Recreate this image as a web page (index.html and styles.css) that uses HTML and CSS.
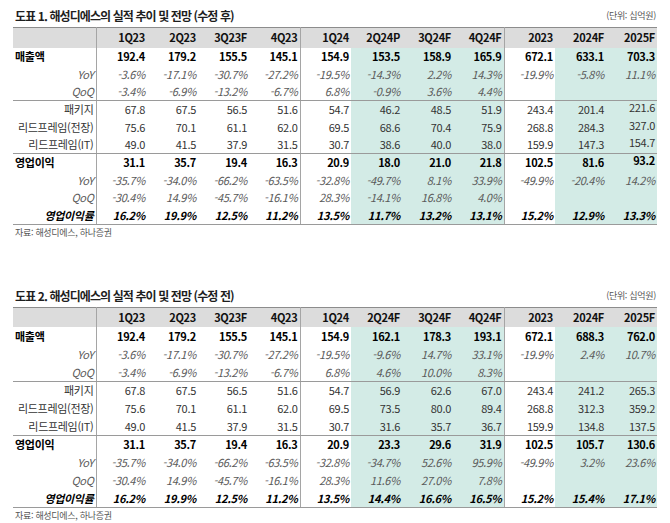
FILE: index.html
```html
<!DOCTYPE html>
<html lang="ko">
<head>
<meta charset="utf-8">
<title>해성디에스 실적 추이 및 전망</title>
<link rel="stylesheet" href="styles.css">
</head>
<body>
<div class="page">

<section class="block">
  <div class="caption">
    <h2 class="title">도표 1. 해성디에스의 실적 추이 및 전망 (수정 후)</h2>
    <span class="unit">(단위: 십억원)</span>
  </div>
  <table class="fin">
    <colgroup>
      <col class="c-label"><col><col><col><col><col><col class="hl"><col class="hl"><col class="hl"><col><col class="hl"><col class="hl">
    </colgroup>
    <thead>
      <tr><th class="lab"></th><th>1Q23</th><th>2Q23</th><th>3Q23F</th><th class="sep">4Q23</th><th>1Q24</th><th>2Q24P</th><th>3Q24F</th><th class="sep">4Q24F</th><th>2023</th><th>2024F</th><th>2025F</th></tr>
    </thead>
    <tbody>
      <tr class="bold"><td class="lab left">매출액</td><td>192.4</td><td>179.2</td><td>155.5</td><td class="sep">145.1</td><td>154.9</td><td>153.5</td><td>158.9</td><td class="sep">165.9</td><td>672.1</td><td>633.1</td><td>703.3</td></tr>
      <tr class="pct"><td class="lab">YoY</td><td>-3.6%</td><td>-17.1%</td><td>-30.7%</td><td class="sep">-27.2%</td><td>-19.5%</td><td>-14.3%</td><td>2.2%</td><td class="sep">14.3%</td><td>-19.9%</td><td>-5.8%</td><td>11.1%</td></tr>
      <tr class="pct end"><td class="lab">QoQ</td><td>-3.4%</td><td>-6.9%</td><td>-13.2%</td><td class="sep">-6.7%</td><td>6.8%</td><td>-0.9%</td><td>3.6%</td><td class="sep">4.4%</td><td></td><td></td><td></td></tr>
      <tr class="sub"><td class="lab">패키지</td><td>67.8</td><td>67.5</td><td>56.5</td><td class="sep">51.6</td><td>54.7</td><td>46.2</td><td>48.5</td><td class="sep">51.9</td><td>243.4</td><td>201.4</td><td class="up">221.6</td></tr>
      <tr class="sub"><td class="lab">리드프레임(전장)</td><td>75.6</td><td>70.1</td><td>61.1</td><td class="sep">62.0</td><td>69.5</td><td>68.6</td><td>70.4</td><td class="sep">75.9</td><td>268.8</td><td>284.3</td><td class="up">327.0</td></tr>
      <tr class="sub end"><td class="lab">리드프레임(IT)</td><td>49.0</td><td>41.5</td><td>37.9</td><td class="sep">31.5</td><td>30.7</td><td>38.6</td><td>40.0</td><td class="sep">38.0</td><td>159.9</td><td>147.3</td><td class="up">154.7</td></tr>
      <tr class="bold"><td class="lab left">영업이익</td><td>31.1</td><td>35.7</td><td>19.4</td><td class="sep">16.3</td><td>20.9</td><td>18.0</td><td>21.0</td><td class="sep">21.8</td><td>102.5</td><td>81.6</td><td class="up">93.2</td></tr>
      <tr class="pct"><td class="lab">YoY</td><td>-35.7%</td><td>-34.0%</td><td>-66.2%</td><td class="sep">-63.5%</td><td>-32.8%</td><td>-49.7%</td><td>8.1%</td><td class="sep">33.9%</td><td>-49.9%</td><td>-20.4%</td><td>14.2%</td></tr>
      <tr class="pct"><td class="lab">QoQ</td><td>-30.4%</td><td>14.9%</td><td>-45.7%</td><td class="sep">-16.1%</td><td>28.3%</td><td>-14.1%</td><td>16.8%</td><td class="sep">4.0%</td><td></td><td></td><td></td></tr>
      <tr class="margin end"><td class="lab">영업이익률</td><td>16.2%</td><td>19.9%</td><td>12.5%</td><td class="sep">11.2%</td><td>13.5%</td><td>11.7%</td><td>13.2%</td><td class="sep">13.1%</td><td>15.2%</td><td>12.9%</td><td>13.3%</td></tr>
    </tbody>
  </table>
  <p class="source">자료: 해성디에스, 하나증권</p>
</section>

<section class="block second">
  <div class="caption">
    <h2 class="title">도표 2. 해성디에스의 실적 추이 및 전망 (수정 전)</h2>
    <span class="unit">(단위: 십억원)</span>
  </div>
  <table class="fin tall">
    <colgroup>
      <col class="c-label"><col><col><col><col><col><col class="hl"><col class="hl"><col class="hl"><col><col class="hl"><col class="hl">
    </colgroup>
    <thead>
      <tr><th class="lab"></th><th>1Q23</th><th>2Q23</th><th>3Q23F</th><th class="sep">4Q23</th><th>1Q24</th><th>2Q24F</th><th>3Q24F</th><th class="sep">4Q24F</th><th>2023</th><th>2024F</th><th>2025F</th></tr>
    </thead>
    <tbody>
      <tr class="bold"><td class="lab left">매출액</td><td>192.4</td><td>179.2</td><td>155.5</td><td class="sep">145.1</td><td>154.9</td><td>162.1</td><td>178.3</td><td class="sep">193.1</td><td>672.1</td><td>688.3</td><td>762.0</td></tr>
      <tr class="pct"><td class="lab">YoY</td><td>-3.6%</td><td>-17.1%</td><td>-30.7%</td><td class="sep">-27.2%</td><td>-19.5%</td><td>-9.6%</td><td>14.7%</td><td class="sep">33.1%</td><td>-19.9%</td><td>2.4%</td><td>10.7%</td></tr>
      <tr class="pct end"><td class="lab">QoQ</td><td>-3.4%</td><td>-6.9%</td><td>-13.2%</td><td class="sep">-6.7%</td><td>6.8%</td><td>4.6%</td><td>10.0%</td><td class="sep">8.3%</td><td></td><td></td><td></td></tr>
      <tr class="sub"><td class="lab">패키지</td><td>67.8</td><td>67.5</td><td>56.5</td><td class="sep">51.6</td><td>54.7</td><td>56.9</td><td>62.6</td><td class="sep">67.0</td><td>243.4</td><td>241.2</td><td>265.3</td></tr>
      <tr class="sub"><td class="lab">리드프레임(전장)</td><td>75.6</td><td>70.1</td><td>61.1</td><td class="sep">62.0</td><td>69.5</td><td>73.5</td><td>80.0</td><td class="sep">89.4</td><td>268.8</td><td>312.3</td><td>359.2</td></tr>
      <tr class="sub end"><td class="lab">리드프레임(IT)</td><td>49.0</td><td>41.5</td><td>37.9</td><td class="sep">31.5</td><td>30.7</td><td>31.6</td><td>35.7</td><td class="sep">36.7</td><td>159.9</td><td>134.8</td><td>137.5</td></tr>
      <tr class="bold"><td class="lab left">영업이익</td><td>31.1</td><td>35.7</td><td>19.4</td><td class="sep">16.3</td><td>20.9</td><td>23.3</td><td>29.6</td><td class="sep">31.9</td><td>102.5</td><td>105.7</td><td>130.6</td></tr>
      <tr class="pct"><td class="lab">YoY</td><td>-35.7%</td><td>-34.0%</td><td>-66.2%</td><td class="sep">-63.5%</td><td>-32.8%</td><td>-34.7%</td><td>52.6%</td><td class="sep">95.9%</td><td>-49.9%</td><td>3.2%</td><td>23.6%</td></tr>
      <tr class="pct"><td class="lab">QoQ</td><td>-30.4%</td><td>14.9%</td><td>-45.7%</td><td class="sep">-16.1%</td><td>28.3%</td><td>11.6%</td><td>27.0%</td><td class="sep">7.8%</td><td></td><td></td><td></td></tr>
      <tr class="margin end"><td class="lab">영업이익률</td><td>16.2%</td><td>19.9%</td><td>12.5%</td><td class="sep">11.2%</td><td>13.5%</td><td>14.4%</td><td>16.6%</td><td class="sep">16.5%</td><td>15.2%</td><td>15.4%</td><td>17.1%</td></tr>
    </tbody>
  </table>
  <p class="source">자료: 해성디에스, 하나증권</p>
</section>

</div>
</body>
</html>
```

FILE: styles.css
```css
* { box-sizing: border-box; }

html, body {
  margin: 0;
  padding: 0;
  background: #ffffff;
}

body {
  font-family: "Noto Sans CJK KR", "Noto Sans", sans-serif;
  color: #222;
}

.page {
  width: 670px;
  padding: 7px 0 0 13px;
}

.block {
  width: 644px;
}

.second {
  margin-top: 48px;
}

.caption {
  display: flex;
  justify-content: space-between;
  align-items: flex-end;
  height: 20px;
  padding: 0 1px 0 2px;
}

.title {
  margin: 0;
  font-size: 12px;
  font-weight: 700;
  letter-spacing: -0.9px;
  color: #1e1e1e;
  line-height: 16px;
  padding-bottom: 3px;
}

.unit {
  font-size: 9px;
  color: #555;
  letter-spacing: -0.3px;
  line-height: 12px;
  padding-bottom: 5px;
}

.fin {
  width: 644px;
  table-layout: fixed;
  border-collapse: collapse;
  font-size: 11px;
  letter-spacing: -0.3px;
}

.fin col { width: 51px; }
.fin col.c-label { width: 83px; }
.fin col.hl { background: #d3ebe6; }

.fin th,
.fin td {
  padding: 0 2px 0 0;
  text-align: right;
  white-space: nowrap;
  vertical-align: middle;
  line-height: 13px;
}

.fin thead th {
  height: 20px;
  background: #dcdcdc;
  border-top: 1px solid #8c8c8c;
  font-weight: 700;
  color: #111;
}

.fin tbody tr { height: 17.7px; }
.fin.tall tbody tr { height: 18px; }

.fin .lab {
  border-right: 1px solid #a5a5a5;
}

.fin .sep {
  border-right: 1px solid #a5a5a5;
}

.fin td.left {
  text-align: left;
  padding-left: 2px;
}

.fin tr.end td {
  border-bottom: 1px solid #9a9a9a;
}

.fin tr.bold td {
  font-weight: 700;
  color: #000;
}

.fin tr.pct td {
  font-style: italic;
  color: #5a5a5a;
}

.fin tr.sub td {
  color: #333;
}

.fin tr.margin td {
  font-weight: 700;
  font-style: italic;
  color: #000;
}

.fin td.up {
  line-height: 11px;
  padding-bottom: 4px;
}

.source {
  margin: 2px 0 0 2px;
  font-size: 9px;
  color: #555;
  letter-spacing: -0.3px;
  line-height: 12px;
}
```
